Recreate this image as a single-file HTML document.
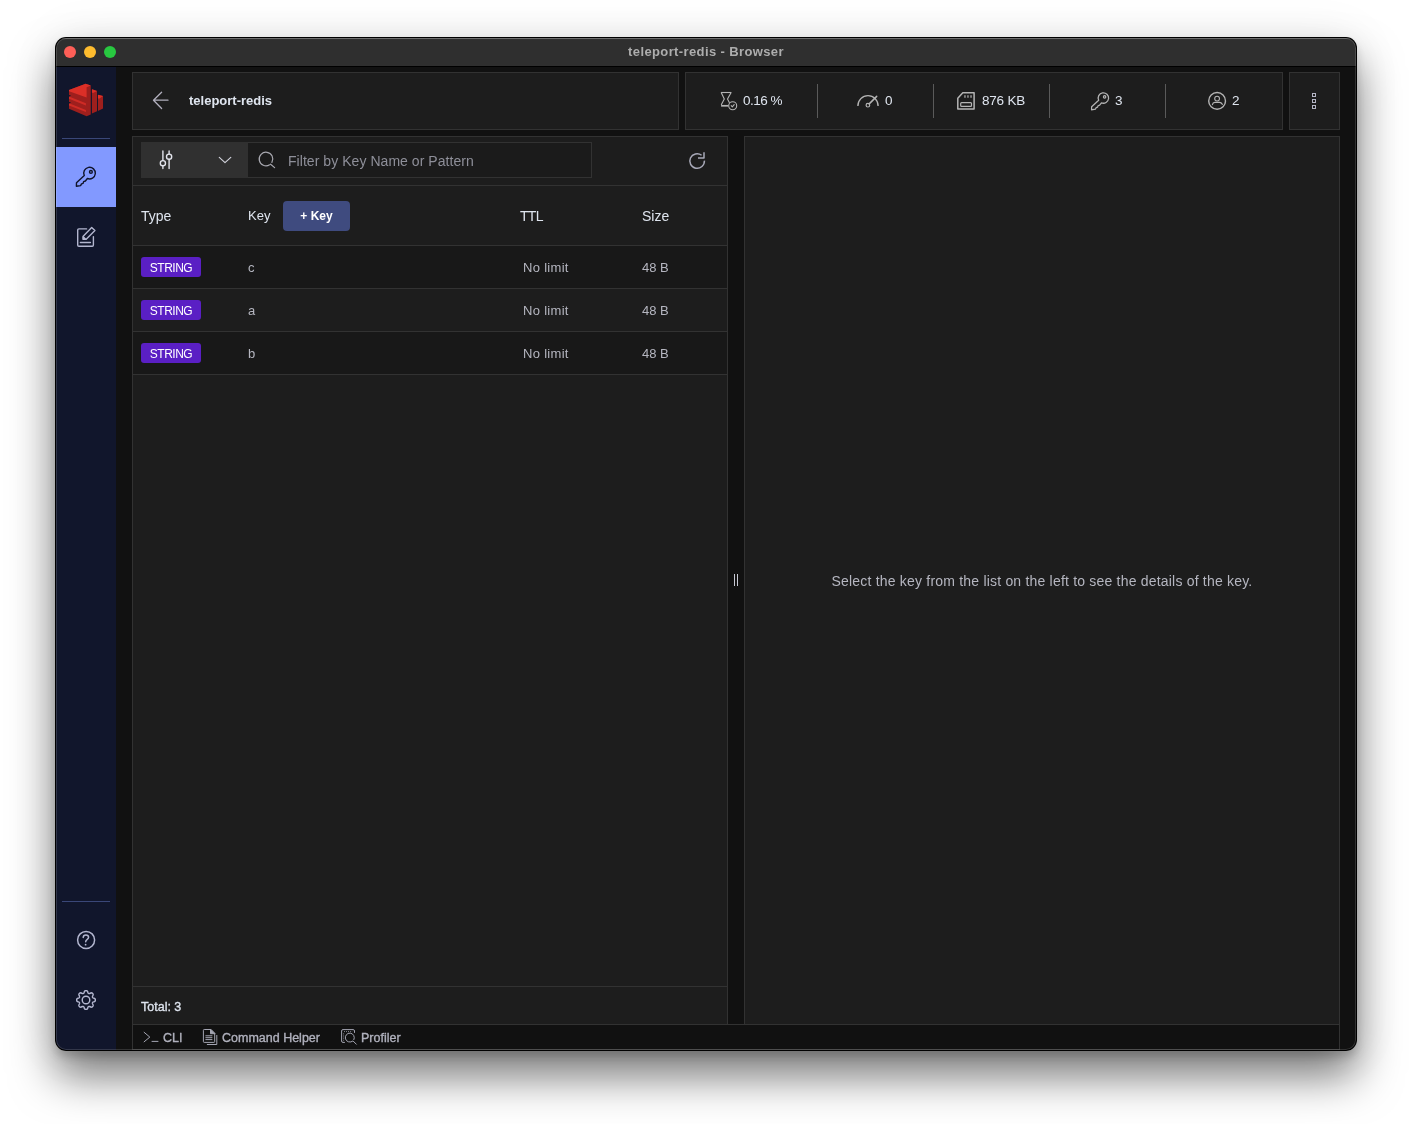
<!DOCTYPE html>
<html lang="en">
<head>
<meta charset="utf-8">
<title>teleport-redis - Browser</title>
<style>
*{box-sizing:border-box;margin:0;padding:0}
html,body{width:1412px;height:1124px;background:#fff;overflow:hidden}
body{font-family:"Liberation Sans",sans-serif;position:relative;color:#dfe5ef}
#ring{position:absolute;left:55px;top:37px;width:1302px;height:1014px;border-radius:11px;background:#000}
#shadow{position:absolute;left:55px;top:37px;width:1302px;height:1014px;border-radius:11px;
 box-shadow:0 26px 44px rgba(0,0,0,.5),0 6px 8px rgba(0,0,0,.15),0 0 50px rgba(0,0,0,.07)}
#win{will-change:transform;position:absolute;left:56px;top:38px;width:1300px;height:1012px;border-radius:10px;overflow:hidden;background:#111}
#titlebar{position:absolute;left:0;top:0;width:100%;height:29px;background:#2f2f2f;border-top:1px solid #555;border-bottom:1px solid #000}
#win:after{content:'';position:absolute;left:0;top:0;right:0;bottom:0;border-radius:10px;box-shadow:inset 0 0 0 1px rgba(255,255,255,.14);pointer-events:none}
#title{position:absolute;left:0;width:100%;top:5px;text-align:center;font-weight:bold;font-size:13px;line-height:16px;color:#adadad;letter-spacing:.38px}
.tl{position:absolute;top:7px;width:12px;height:12px;border-radius:50%}
#side{position:absolute;left:0;top:29px;width:60px;height:983px;background:#11162c}
.hr{position:absolute;left:6px;width:48px;height:1px;background:#3a4778}
#active{position:absolute;left:0;top:80px;width:60px;height:60px;background:#8299ff}
.panel{position:absolute;background:#1d1d1d;border:1px solid #323232}
.t{position:absolute;white-space:nowrap}
.sep{position:absolute;top:11px;width:1px;height:34px;background:#5a5a5a}
.st{top:20px;font-size:13.5px;line-height:16px;color:#dfe5ef;letter-spacing:-.2px}
.row{position:absolute;left:0;width:594px;height:43px;border-bottom:1px solid #323232}
.badge{position:absolute;left:8px;top:11px;width:60px;height:20px;border-radius:3px;background:#5a1fc4;color:#fff;font-size:12px;line-height:22px;text-align:center;letter-spacing:-.5px;overflow:hidden}
.c{top:14px;font-size:13px;line-height:15px;color:#b5b6c0}
.h{top:71px;font-size:14px;line-height:16px;color:#dfe5ef}
.bt{top:6px;font-size:12.5px;line-height:14px;color:#b0b1bd;-webkit-text-stroke:.35px #b0b1bd}
svg{position:absolute;overflow:visible;fill:none}
</style>
</head>
<body>
<div id="shadow"></div><div id="ring"></div>
<div id="win">
 <div id="titlebar">
  <div class="tl" style="left:8px;background:#fe5f57"></div>
  <div class="tl" style="left:28px;background:#febc2e"></div>
  <div class="tl" style="left:48px;background:#28c840"></div>
  <div id="title">teleport-redis - Browser</div>
 </div>
 <div id="side">
  <!-- logo : page (60,76) => side (4,9) -->
  <svg style="left:4px;top:9px" width="52" height="52" viewBox="0 0 1124 1124">
   <polygon points="195,300 555,165 665,205 665,830 575,870 195,710" fill="#9e1f1d"/>
   <polygon points="195,300 555,165 665,205 575,245 575,465 195,330" fill="#dc2f27"/>
   <polygon points="195,445 560,590 560,635 195,490" fill="#cf2b25"/>
   <polygon points="195,590 560,735 560,780 195,635" fill="#cf2b25"/>
   <polygon points="185,405 240,425 185,448" fill="#11162c"/><polygon points="185,555 240,575 185,598" fill="#11162c"/>
   <polygon points="690,285 800,325 800,760 690,810" fill="#9e1f1d"/>
   <polygon points="690,285 800,325 715,365 690,355" fill="#dc2f27"/>
   <polygon points="820,405 930,435 930,705 820,755" fill="#9e1f1d"/>
   <polygon points="820,405 930,435 845,490 820,480" fill="#dc2f27"/>
  </svg>
  <div class="hr" style="top:71px"></div>
  <div id="active"></div>
  <!-- key icon: page (66,157) => side (10,90) -->
  <svg id="keyico" style="left:10px;top:90px" width="40" height="40" viewBox="0 0 40 40" stroke="#10142b" stroke-width="1.4" stroke-linejoin="round" stroke-linecap="round">
   <path d="M18.3 18.6L10.5 25.8L10.4 29.3L14.6 28.6L15.5 26.9L17.1 26.3L17.6 24.7L19.4 24L21.4 21.5A5.8 5.8 0 1 0 18.3 18.6Z"/>
   <circle cx="24.9" cy="14.9" r="1.4"/>
  </svg>
  <!-- edit icon: page (66,217) => side (10,150) -->
  <svg style="left:10px;top:150px" width="40" height="40" viewBox="0 0 40 40" stroke="#b3b6cf" stroke-width="1.4" stroke-linejoin="round" stroke-linecap="round">
   <path d="M20.6 11.9H12.9Q11.7 11.9 11.7 13.1V28Q11.7 29.2 12.9 29.2H26.2Q27.4 29.2 27.4 28V19.6"/>
   <path d="M14.4 25.5H24.4"/>
   <path d="M25.7 10.5L28.9 13.5L20.2 22.2H17.2V19.2Z"/>
   <path d="M17.2 19.8L19.6 22.2H17.2Z" fill="#b3b6cf"/>
  </svg>
  <div class="hr" style="top:834px"></div>
  <!-- help: page center (86.1,939.9) => side (30.1,872.9) -->
  <svg style="left:10px;top:853px" width="40" height="40" viewBox="0 0 40 40" stroke="#b3b6cf" stroke-width="1.5" stroke-linecap="round" stroke-linejoin="round">
   <circle cx="20.1" cy="19.9" r="8.5"/>
   <path d="M17.2 17.6Q17.2 15 19.9 15Q22.6 15 22.6 17.3Q22.6 18.6 21 19.6Q19.7 20.5 19.7 21.7"/>
   <circle cx="19.6" cy="24.7" r="0.9" fill="#b3b6cf" stroke="none"/>
  </svg>
  <!-- gear: page center (86,1000) => side (30,933) -->
  <svg style="left:10px;top:913px" width="40" height="40" viewBox="-20 -20 40 40" stroke="#b3b6cf" stroke-width="1.4" stroke-linejoin="round">
   <path d="M9.3 0.0L9.3 0.6L9.1 1.2L8.3 1.7L7.2 1.9L6.8 2.3L6.5 2.7L6.4 3.2L6.5 3.7L7.0 4.7L7.2 5.6L7.0 6.1L6.6 6.6L6.1 7.0L5.6 7.2L4.7 7.0L3.7 6.5L3.2 6.4L2.7 6.5L2.3 6.8L1.9 7.2L1.7 8.3L1.2 9.1L0.6 9.3L0.0 9.3L-0.6 9.3L-1.2 9.1L-1.7 8.3L-1.9 7.2L-2.3 6.8L-2.7 6.5L-3.2 6.4L-3.7 6.5L-4.7 7.0L-5.6 7.2L-6.1 7.0L-6.6 6.6L-7.0 6.1L-7.2 5.6L-7.0 4.7L-6.5 3.7L-6.4 3.2L-6.5 2.7L-6.8 2.3L-7.2 1.9L-8.3 1.7L-9.1 1.2L-9.3 0.6L-9.3 0.0L-9.3 -0.6L-9.1 -1.2L-8.3 -1.7L-7.2 -1.9L-6.8 -2.3L-6.5 -2.7L-6.4 -3.2L-6.5 -3.7L-7.0 -4.7L-7.2 -5.6L-7.0 -6.1L-6.6 -6.6L-6.1 -7.0L-5.6 -7.2L-4.7 -7.0L-3.7 -6.5L-3.2 -6.4L-2.7 -6.5L-2.3 -6.8L-1.9 -7.2L-1.7 -8.3L-1.2 -9.1L-0.6 -9.3L-0.0 -9.3L0.6 -9.3L1.2 -9.1L1.7 -8.3L1.9 -7.2L2.3 -6.8L2.7 -6.5L3.2 -6.4L3.7 -6.5L4.7 -7.0L5.6 -7.2L6.1 -7.0L6.6 -6.6L7.0 -6.1L7.2 -5.6L7.0 -4.7L6.5 -3.7L6.4 -3.2L6.5 -2.7L6.8 -2.3L7.2 -1.9L8.3 -1.7L9.1 -1.2L9.3 -0.6Z"/>
   <circle cx="0" cy="0" r="3.8"/>
  </svg>
 </div>

 <!-- header -->
 <div class="panel" id="hdr" style="left:76px;top:34px;width:547px;height:58px">
  <svg style="left:0;top:0" width="60" height="56" viewBox="133 73 60 56" stroke="#b0aebc" stroke-width="1.3" stroke-linecap="round" stroke-linejoin="round">
   <path d="M168 100.2H153.5M161.6 92.3L153.5 100.2L161.6 108.5"/>
  </svg>
  <div class="t" style="left:56px;top:20px;font-size:13px;font-weight:bold;line-height:16px;color:#dfe5ef">teleport-redis</div>
 </div>
 <div class="panel" id="stats" style="left:629px;top:34px;width:598px;height:58px">
  <div class="sep" style="left:131px"></div>
  <div class="sep" style="left:247px"></div>
  <div class="sep" style="left:363px"></div>
  <div class="sep" style="left:479px"></div>
  <!-- hourglass: page origin (715,86) => stats inner (715-686, 86-73) = (29,13) -->
  <svg style="left:29px;top:13px" width="30" height="30" viewBox="0 0 30 30" stroke="#b4b4b4" stroke-width="1.1" stroke-linejoin="round" stroke-linecap="round">
   <path d="M6.1 6.5H16.2" stroke-linecap="butt"/><path d="M16 6.8L12.5 13.1L14.3 16.4M6.3 6.8L9.3 13.1L6.4 18.6"/>
   <path d="M6.1 19.8H13.3" stroke-width="1.7" stroke-linecap="butt"/>
   <circle cx="17.7" cy="19.7" r="4"/>
   <path d="M16.2 19.7L17.3 20.8L19.2 18.6"/>
  </svg>
  <!-- gauge: origin (853,86) => (167,13) -->
  <svg style="left:167px;top:13px" width="30" height="30" viewBox="0 0 30 30" stroke="#b4b4b4" stroke-width="1.5" stroke-linecap="butt">
   <path d="M4.9 19.9A10.1 10.3 0 0 1 25.1 19.9" stroke-width="1.4"/>
   <path d="M16.2 17.9L23.7 10.4" stroke-width="1.5" stroke-linecap="round"/>
   <circle cx="14.9" cy="19.2" r="1.8" stroke-width="1.2"/>
  </svg>
  <!-- memory: origin (951,86) => (265,13) -->
  <svg style="left:265px;top:13px" width="30" height="30" viewBox="0 0 30 30" stroke="#b4b4b4" stroke-width="1.5" stroke-linejoin="round">
   <path d="M11.8 6.7H23.1V23H6.8V12.2Z"/>
   <rect x="9.7" y="16.6" width="10.8" height="3.7" rx=".9" stroke-width="1.2"/>
   <path d="M13.1 9.3h1.7v2.4h-1.7zM16.1 9.3h1.7v2.4h-1.7zM19.2 9.3h1.7v2.4h-1.7z" fill="#8a8a8a" stroke="none"/>
  </svg>
  <!-- key: origin (1085,86) => (399,13) -->
  <svg style="left:399px;top:13px" width="30" height="30" viewBox="0 0 30 30" stroke="#b4b4b4" stroke-width="1.4" stroke-linejoin="round" stroke-linecap="round">
   <g transform="translate(-2.8 -2.5) scale(.9)">
   <path d="M18.3 18.6L10.5 25.8L10.4 29.3L14.6 28.6L15.5 26.9L17.1 26.3L17.6 24.7L19.4 24L21.4 21.5A5.8 5.8 0 1 0 18.3 18.6Z"/>
   <circle cx="24.9" cy="14.9" r="1.3"/>
   </g>
  </svg>
  <!-- user: origin (1202,86) => (516,13) -->
  <svg style="left:516px;top:13px" width="30" height="30" viewBox="0 0 30 30" stroke="#b4b4b4" stroke-width="1.4" stroke-linecap="round">
   <circle cx="15.1" cy="14.9" r="8.4"/>
   <circle cx="15.1" cy="12.6" r="2.4" stroke-width="1.1"/>
   <path d="M10.4 18.6Q10.8 16.4 12.8 16.4H17.6Q19.2 16.4 20.4 18.4" stroke-width="1.1"/>
  </svg>
  <div class="t st" style="left:57px;letter-spacing:-.5px">0.16 %</div>
  <div class="t st" style="left:199px">0</div>
  <div class="t st" style="left:296px">876 KB</div>
  <div class="t st" style="left:429px">3</div>
  <div class="t st" style="left:546px">2</div>
 </div>
 <div class="panel" id="more" style="left:1233px;top:34px;width:51px;height:58px">
  <!-- squares at page x=1312,y=93,99,105 => inner (1312-1290=22, 93-73=20) -->
  <svg style="left:0;top:0" width="49" height="56" viewBox="0 0 49 56" stroke="#b4b5c5" stroke-width="1">
   <rect x="22.5" y="20.5" width="3" height="3"/><rect x="22.5" y="26.5" width="3" height="3"/><rect x="22.5" y="32.5" width="3" height="3"/>
  </svg>
 </div>

 <!-- left list panel: page (132,136) inner origin (133,137) -->
 <div class="panel" id="list" style="left:76px;top:98px;width:596px;height:889px">
  <div style="position:absolute;left:8px;top:5px;width:451px;height:36px;border:1px solid #323232;background:#1b1b1b"></div>
  <div style="position:absolute;left:8px;top:5px;width:107px;height:36px;background:#303030"></div>
  <!-- filter svg uses page coords -->
  <svg style="left:0;top:0" width="594" height="48" viewBox="133 137 594 48" stroke-linecap="round" stroke-linejoin="round">
   <g stroke="#e3e4ec" stroke-width="1.4">
    <path d="M162.9 151V160.4M162.9 166V168.6M169.1 151V153.9M169.1 159.5V168.6"/>
    <circle cx="162.9" cy="163.2" r="2.6"/><circle cx="169.1" cy="156.7" r="2.6"/>
   </g>
   <path d="M219.3 157.4L225 162.6L230.8 157.4" stroke="#d0d1da" stroke-width="1.2"/>
   <g stroke="#a8a8b0" stroke-width="1.2">
    <path d="M269.6 164.8A6.8 6.8 0 1 1 271.9 162.4M270.6 164.2L274.6 167.6"/>
   </g>
   <g stroke="#a8a9b8" stroke-width="1.5" stroke-linecap="butt">
    <path d="M701.6 155.25A7.3 7.3 0 1 0 704.4 160.6"/>
    <path d="M704 152.2V158.1H698"/>
   </g>
  </svg>
  <div class="t" style="left:155px;top:16px;font-size:14px;line-height:16px;color:#8e8f99;letter-spacing:.05px">Filter by Key Name or Pattern</div>
  <div style="position:absolute;left:0;top:48px;width:594px;height:1px;background:#323232"></div>
  <!-- header row -->
  <div class="t h" style="left:8px">Type</div>
  <div class="t h" style="left:115px;font-size:13px">Key</div>
  <div style="position:absolute;left:150px;top:64px;width:67px;height:30px;border-radius:4px;background:#3f4b7f;color:#fff;font-size:12px;font-weight:bold;line-height:30px;text-align:center">+ Key</div>
  <div class="t h" style="left:387px;letter-spacing:-.7px">TTL</div>
  <div class="t h" style="left:509px">Size</div>
  <div style="position:absolute;left:0;top:108px;width:594px;height:1px;background:#323232"></div>
  <!-- rows -->
  <div class="row" style="top:109px;background:#181818"><div class="badge">STRING</div><div class="t c" style="left:115px">c</div><div class="t c" style="left:390px;letter-spacing:.3px">No limit</div><div class="t c" style="left:509px">48 B</div></div>
  <div class="row" style="top:152px"><div class="badge">STRING</div><div class="t c" style="left:115px">a</div><div class="t c" style="left:390px;letter-spacing:.3px">No limit</div><div class="t c" style="left:509px">48 B</div></div>
  <div class="row" style="top:195px;background:#181818"><div class="badge">STRING</div><div class="t c" style="left:115px">b</div><div class="t c" style="left:390px;letter-spacing:.3px">No limit</div><div class="t c" style="left:509px">48 B</div></div>
  <!-- footer -->
  <div style="position:absolute;left:0;top:849px;width:594px;height:1px;background:#323232"></div>
  <div class="t" style="left:8px;top:863px;font-size:12.5px;line-height:15px;color:#dfe5ef;-webkit-text-stroke:.3px #dfe5ef">Total: 3</div>
 </div>
 <div style="position:absolute;left:678px;top:536px;width:1px;height:12px;background:#c8c9d4"></div>
 <div style="position:absolute;left:681px;top:536px;width:1px;height:12px;background:#c8c9d4"></div>
 <div class="panel" id="detail" style="left:688px;top:98px;width:596px;height:889px">
  <div class="t" style="left:0;width:100%;top:436px;text-align:center;font-size:14px;line-height:16px;color:#b5b6c0;letter-spacing:.2px">Select the key from the list on the left to see the details of the key.</div>
 </div>
 <div class="panel" id="bottom" style="left:76px;top:986px;width:1208px;height:26px;background:#111">
  <!-- page coords svg: inner origin (133,1025) -->
  <svg style="left:0;top:0" width="300" height="24" viewBox="133 1025 300 24" stroke="#a4a5b2" stroke-width="1" stroke-linecap="round" stroke-linejoin="round">
   <path d="M144.1 1032.3L149.8 1037.1L144.1 1041.8M152 1041.4H158"/>
   <path d="M210.5 1029.5H204.2Q203.4 1029.5 203.4 1030.3V1041.6Q203.4 1042.4 204.2 1042.4H213.9Q214.7 1042.4 214.7 1041.6V1033.7Z"/>
   <path d="M210.5 1029.5V1033.7H214.7Z" fill="#a4a5b2"/>
   <path d="M205.8 1035.8H212M205.8 1037.7H212M205.8 1039.6H212M216.8 1035.4V1044.5H207.3"/>
   <path d="M354.5 1032.5V1031Q354.5 1029.6 353.1 1029.6H343Q341.6 1029.6 341.6 1031V1041Q341.6 1042.4 343 1042.4H344.5"/>
   <path d="M344 1031.6H352.5M343.6 1033.5V1040.5" stroke-dasharray="0.8 1.3" stroke-linecap="butt"/>
   <path d="M352.6 1041.2A4.5 4.5 0 1 1 353.9 1039.6M353.3 1041.2L356.3 1044.2"/>
  </svg>
  <div class="t bt" style="left:30px">CLI</div>
  <div class="t bt" style="left:89px">Command Helper</div>
  <div class="t bt" style="left:228px">Profiler</div>
 </div>
</div>
</body>
</html>
